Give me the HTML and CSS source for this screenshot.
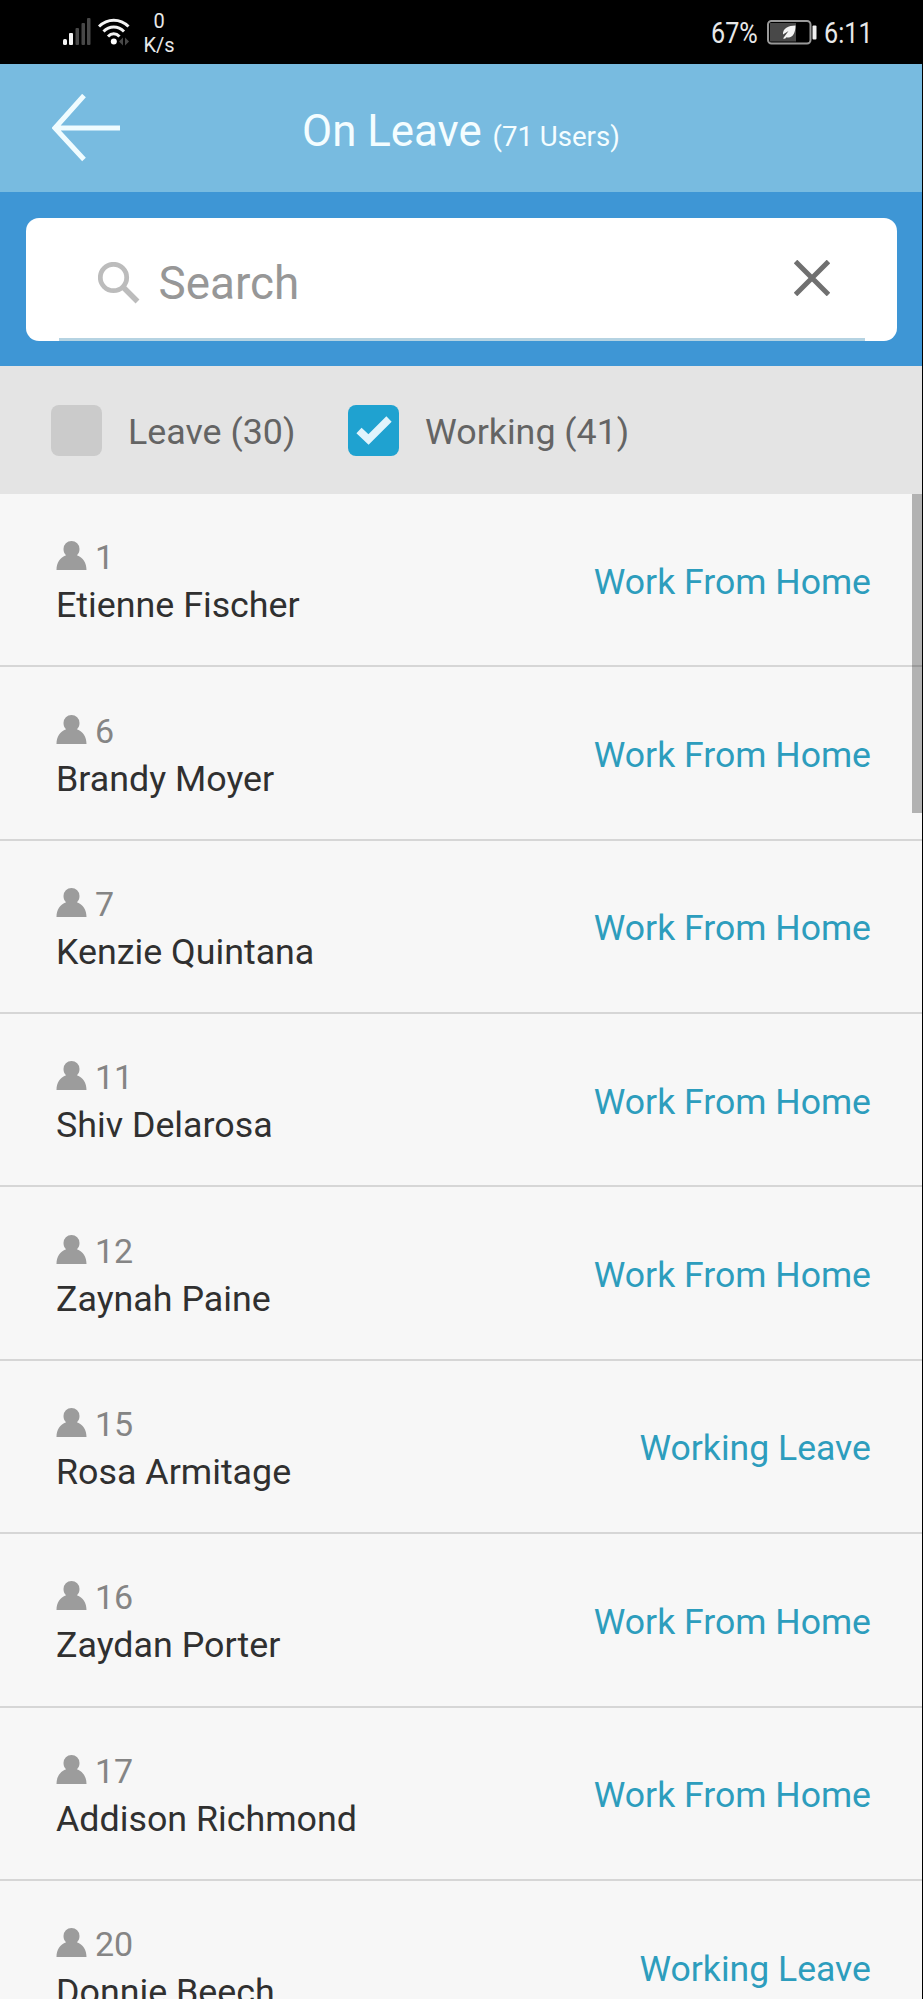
FILE: index.html
```
<!DOCTYPE html>
<html lang="en">
<head>
  <meta charset="UTF-8" />
  <meta name="viewport" content="width=device-width, initial-scale=1.0"/>
  <title>On Leave</title>
  <link rel="stylesheet" href="styles.css">
</head>
<body>

  <!-- Shared user icon -->
  <svg width="0" height="0" class="defs">
    <symbol id="user" viewBox="0 0 30 29">
      <path d="M15 0a8 8 0 0 1 8 8c0 2.800-1 4.800-2.600 6.300C26.500 16.600 30 22 30 29H0c0-7 3.500-12.400 9.600-14.700C8 12.800 7 10.800 7 8a8 8 0 0 1 8-8z"/>
    </symbol>
  </svg>

  <div class="app">
    <!-- Status bar -->
    <div class="status-bar">
      <svg class="signal" width="28" height="28" viewBox="0 0 28 28">
        <rect x="0" y="21" width="4" height="6" rx="1.500" fill="#f4f4f4"/>
        <rect x="6" y="15" width="4" height="12" rx="1" fill="#f4f4f4"/>
        <rect x="12.500" y="10" width="3.500" height="17" rx="1" fill="#484848"/>
        <rect x="18.500" y="5" width="3.500" height="22" rx="1" fill="#484848"/>
        <rect x="24" y="0" width="3.500" height="27" rx="1" fill="#484848"/>
      </svg>
      <svg class="wifi" width="32" height="28" viewBox="0 0 32 28">
        <g fill="none" stroke="#f4f4f4" stroke-width="3">
          <path d="M1 8.500C9.500 0 22 0 30.500 8.500"/>
          <path d="M5.500 13.500C11.500 7.500 20 7.500 26 13.500"/>
          <path d="M10 18.500c3.500-3.800 8-3.800 11.500 0"/>
        </g>
        <circle cx="15.800" cy="23.500" r="3" fill="#fff"/>
        <path d="M25 19.500v8l-4-4zM27 19.500v8l4-4z" fill="#484848"/>
      </svg>
      <div class="speed"><span>0</span><span>K/s</span></div>
      <div class="percent">67%</div>
      <svg class="battery" width="50" height="25" viewBox="0 0 50 25">
        <rect x="1" y="1" width="42.500" height="22.500" rx="3.500" fill="none" stroke="#999" stroke-width="2"/>
        <rect x="3" y="3" width="26" height="18.500" fill="#484848"/>
        <path d="M28.500 5.500c-7 0-13 3-12.500 9l5.500-3.500-5.500 7.500 2 .2 1.500-1.500c6 1.500 9-4 9-11.700z" fill="#f4f4f4"/>
        <rect x="45.500" y="5.500" width="4" height="14" rx="1" fill="#f0f0f0"/>
      </svg>
      <div class="clock">6:11</div>
    </div>

    <!-- Header -->
    <div class="header">
      <svg class="back" width="68" height="68" viewBox="0 0 68 68" fill="none" stroke="#f0fcff" stroke-width="5">
        <path d="M32 1.500L3 34l29 31.500M2.500 34H68"/>
      </svg>
      <h1>On Leave <small>(71 Users)</small></h1>
    </div>

    <!-- Search -->
    <div class="search-panel">
      <div class="search-box">
        <svg class="magnifier" width="42" height="42" viewBox="0 0 42 42" fill="none" stroke="#bcbcbc">
          <circle cx="15.500" cy="15.500" r="13.200" stroke-width="4.800"/>
          <path d="M25 25l14.500 14.500" stroke-width="5.500"/>
        </svg>
        <span class="placeholder">Search</span>
        <svg class="clear" width="36" height="36" viewBox="0 0 36 36" stroke="#707070" stroke-width="5">
          <path d="M1.500 1.500l33 33M34.500 1.500l-33 33"/>
        </svg>
      </div>
    </div>

    <!-- Filters -->
    <div class="filters">
      <div class="check"></div>
      <span class="leave">Leave (30)</span>
      <div class="check checked">
        <svg width="36" height="29" viewBox="0 0 36 29" fill="none" stroke="#e0f4fc" stroke-width="7.500">
          <path d="M3 14.500l9.500 9L33 3"/>
        </svg>
      </div>
      <span class="working">Working (41)</span>
    </div>

    <!-- User list -->
    <div class="list">
      <div class="scrollbar"></div>
      <div class="row">
        <div class="user"><div class="id"><svg><use href="#user"/></svg>1</div><div class="name">Etienne Fischer</div></div>
        <div class="type">Work From Home</div>
      </div>
      <div class="row">
        <div class="user"><div class="id"><svg><use href="#user"/></svg>6</div><div class="name">Brandy Moyer</div></div>
        <div class="type">Work From Home</div>
      </div>
      <div class="row">
        <div class="user"><div class="id"><svg><use href="#user"/></svg>7</div><div class="name">Kenzie Quintana</div></div>
        <div class="type">Work From Home</div>
      </div>
      <div class="row">
        <div class="user"><div class="id"><svg><use href="#user"/></svg>11</div><div class="name">Shiv Delarosa</div></div>
        <div class="type">Work From Home</div>
      </div>
      <div class="row">
        <div class="user"><div class="id"><svg><use href="#user"/></svg>12</div><div class="name">Zaynah Paine</div></div>
        <div class="type">Work From Home</div>
      </div>
      <div class="row">
        <div class="user"><div class="id"><svg><use href="#user"/></svg>15</div><div class="name">Rosa Armitage</div></div>
        <div class="type">Working Leave</div>
      </div>
      <div class="row">
        <div class="user"><div class="id"><svg><use href="#user"/></svg>16</div><div class="name">Zaydan Porter</div></div>
        <div class="type">Work From Home</div>
      </div>
      <div class="row">
        <div class="user"><div class="id"><svg><use href="#user"/></svg>17</div><div class="name">Addison Richmond</div></div>
        <div class="type">Work From Home</div>
      </div>
      <div class="row">
        <div class="user"><div class="id"><svg><use href="#user"/></svg>20</div><div class="name">Donnie Beech</div></div>
        <div class="type">Working Leave</div>
      </div>
    </div>
  </div>

</body>
</html>
```
FILE: styles.css
```
* {
  box-sizing: border-box;
}

body {
  margin: 0;
  background: #000;
  font-family: Roboto, "Liberation Sans", sans-serif;
}

svg {
  display: block;
  flex: none;
}

.defs {
  position: absolute;
}

.app {
  width: 922px;
  height: 1999px;
  overflow: hidden;
  display: flex;
  flex-direction: column;
  background: #f7f7f7;
}

.status-bar {
  flex: none;
  height: 64px;
  display: flex;
  align-items: center;
  padding: 0 49px 0 63px;
  background: #000;
  color: #e8e8e8;
}

.wifi {
  margin-left: 7px;
}

.speed {
  width: 32px;
  margin-left: 13px;
  margin-top: 3px;
  display: flex;
  flex-direction: column;
  align-items: center;
  font-size: 20px;
  line-height: 23.500px;
}

.percent,
.clock {
  font-size: 30px;
  line-height: 62px;
  padding-top: 2px;
  white-space: nowrap;
  transform: scaleX(0.84);
}

.percent {
  width: 47px;
  margin-left: auto;
  transform-origin: left;
}

.battery {
  margin-left: 9px;
}

.clock {
  width: 49px;
  margin-left: 7px;
  transform-origin: left;
}

.header {
  flex: none;
  height: 128px;
  display: flex;
  align-items: center;
  padding-left: 52px;
  background: #78bbe0;
}

h1 {
  margin: 5px 0 0 182px;
  font-size: 43.800px;
  font-weight: 400;
  color: #f4fdff;
  white-space: nowrap;
}

h1 small {
  font-size: 27.600px;
}

.search-panel {
  flex: none;
  height: 174px;
  padding: 26px 25px 0 25.500px;
  background: #3e96d5;
}

.search-box {
  height: 123px;
  display: flex;
  align-items: center;
  padding: 0 67px 0 72px;
  border-radius: 13px;
  /* thin underline inset from both corners */
  background: linear-gradient(#b5d3e2, #b5d3e2) 33px 100% / 806px 3px no-repeat #fff;
}

.magnifier {
  margin-top: 7px;
}

.placeholder {
  flex: 1;
  margin: 7px 0 0 19px;
  font-size: 45.800px;
  color: #979797;
}

.clear {
  margin-top: -3px;
}

.filters {
  flex: none;
  height: 128px;
  display: flex;
  align-items: center;
  padding-left: 51px;
  background: #e4e4e4;
  color: #646464;
  font-size: 35.800px;
  white-space: nowrap;
}

.check {
  width: 51px;
  height: 51px;
  border-radius: 8px;
  background: #cbcbcb;
}

.checked {
  display: flex;
  align-items: center;
  justify-content: center;
  background: #1fa2d0;
}

.leave {
  width: 219px;
  padding: 3px 0 0 26px;
}

.leave + .check {
  margin-left: 27px;
}

.working {
  padding: 3px 0 0 26px;
}

.list {
  position: relative;
}

.scrollbar {
  position: absolute;
  top: 0;
  right: 0;
  width: 10px;
  height: 319px;
  background: rgba(0, 0, 0, 0.28);
}

.row {
  height: 173.360px;
  display: flex;
  align-items: center;
  justify-content: space-between;
  padding: 3px 51px 0 56px;
  border-bottom: 2px solid #d6d6d6;
  font-size: 35.800px;
  line-height: 48px;
  white-space: nowrap;
}

.id {
  display: flex;
  align-items: center;
  font-size: 34px;
  color: #858585;
}

.id svg {
  width: 31px;
  height: 29px;
  margin: -3px 8px 0 0;
  fill: #9c9c9c;
}

.name {
  color: #303030;
}

.type {
  padding-top: 1px;
  font-size: 35.600px;
  color: #2d9dbd;
}
```
